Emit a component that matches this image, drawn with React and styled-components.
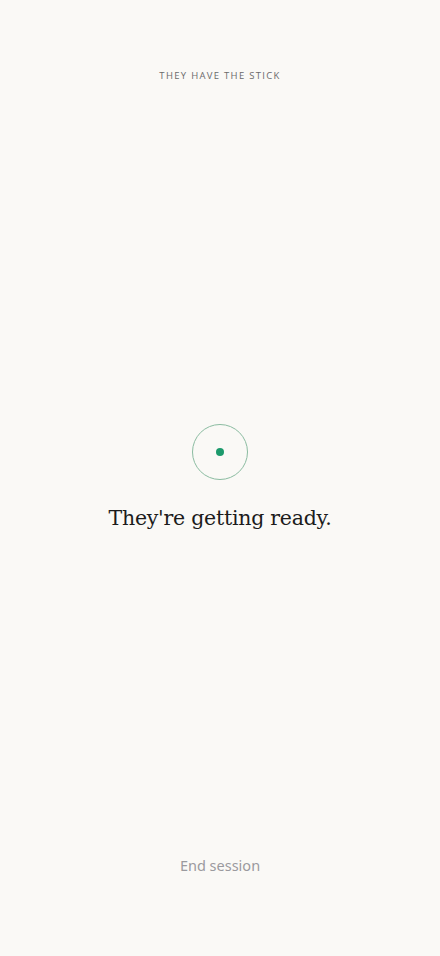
import React from "react";
import styled, { createGlobalStyle } from "styled-components";

const Global = createGlobalStyle`
  html, body { margin: 0; padding: 0; background: #faf9f6; }
  * { box-sizing: border-box; }
`;

const Page = styled.div`
  height: 956px;
  display: flex;
  flex-direction: column;
  align-items: center;
  background: #faf9f6;
  padding: 69px 0 80px;
`;

const Label = styled.div`
  font-family: "Open Sans", "Noto Sans", sans-serif;
  font-size: 9.5px;
  letter-spacing: 1.3px;
  color: #6b6b6b;
  text-transform: uppercase;
  line-height: 13px;
`;

const Center = styled.div`
  flex: 1;
  display: flex;
  flex-direction: column;
  align-items: center;
  justify-content: center;
  padding-top: 20px;
`;

const Ring = styled.div`
  width: 56px;
  height: 56px;
  border-radius: 50%;
  border: 1.7px solid #8bbca1;
  display: flex;
  align-items: center;
  justify-content: center;
`;

const Dot = styled.div`
  width: 8px;
  height: 8px;
  border-radius: 50%;
  background: #1c9a6c;
`;

const Heading = styled.h1`
  margin: 23px 0 0;
  font-family: "DejaVu Serif", "Liberation Serif", serif;
  font-weight: 400;
  font-size: 20.5px;
  letter-spacing: -0.25px;
  color: #1c1c1c;
  line-height: 30px;
`;

const EndButton = styled.button`
  border: none;
  background: none;
  font-family: "Noto Sans", "Open Sans", sans-serif;
  font-size: 14.5px;
  color: #9a9a9e;
  cursor: pointer;
  padding: 0;
  line-height: 22px;
`;

export default function App() {
  return (
    <>
      <Global />
      <Page>
        <Label>They have the stick</Label>
        <Center>
          <Ring>
            <Dot />
          </Ring>
          <Heading>They're getting ready.</Heading>
        </Center>
        <EndButton>End session</EndButton>
      </Page>
    </>
  );
}
